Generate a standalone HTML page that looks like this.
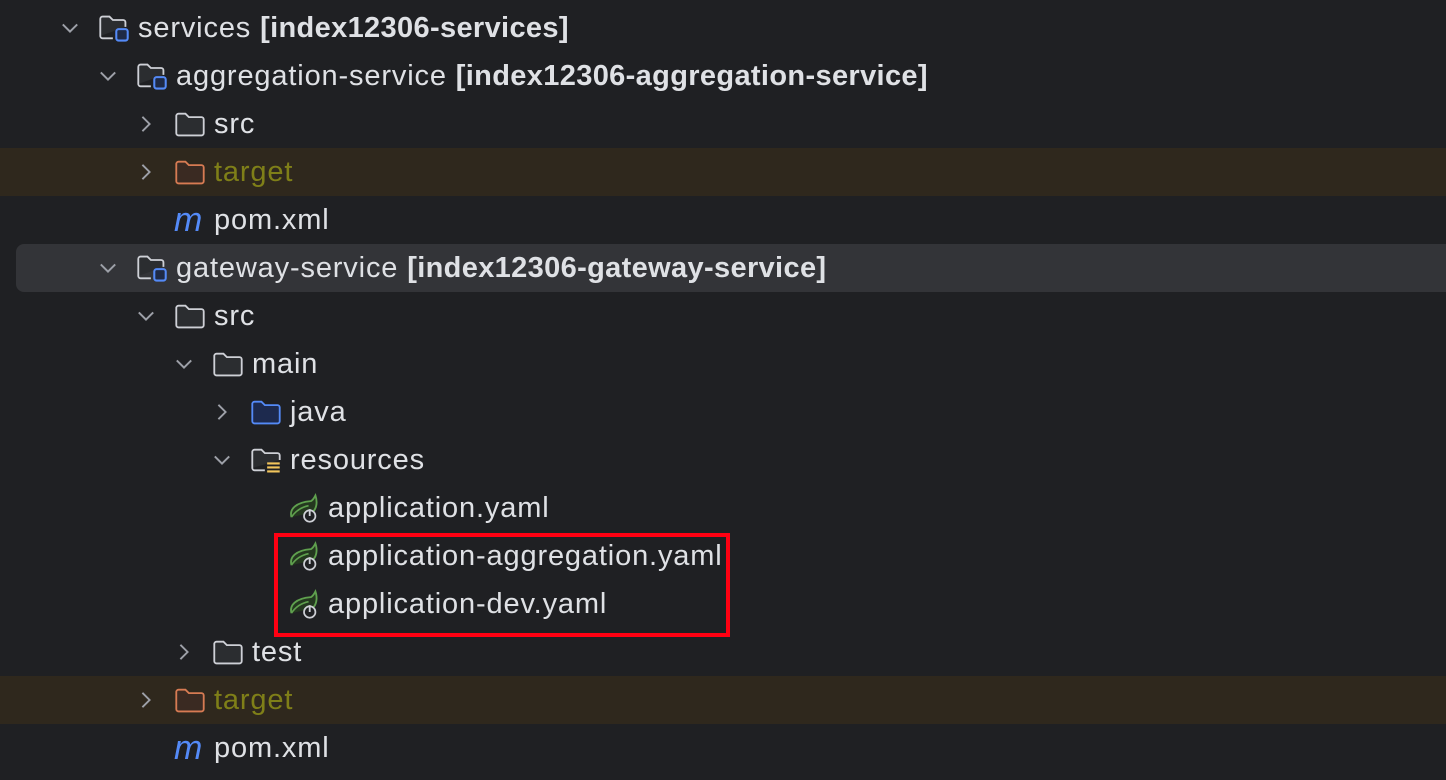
<!DOCTYPE html>
<html><head><meta charset="utf-8"><style>
html,body{margin:0;padding:0;width:1446px;height:780px;overflow:hidden;background:#1f2023;font-family:"Liberation Sans",sans-serif;}
.row{position:absolute;left:0;width:1446px;height:48px;}
.t{position:absolute;top:8px;font-size:29px;letter-spacing:0.85px;color:#dfe1e5;white-space:nowrap;line-height:32px;}
.t b{font-weight:bold;letter-spacing:0.35px;}
.ch{position:absolute;top:12px;width:24px;height:24px;}
.ic{position:absolute;top:8px;width:32px;height:32px;}
.m{position:absolute;top:5px;font-family:"Liberation Sans",sans-serif;font-style:italic;font-size:34px;color:#548af7;}
</style></head><body>
<div style="position:absolute;left:0;top:148px;width:1446px;height:48px;background:#2f281d"></div>
<div style="position:absolute;left:0;top:676px;width:1446px;height:48px;background:#2f281d"></div>
<div style="position:absolute;left:16px;top:244px;width:1440px;height:48px;background:#333438;border-radius:8px"></div>

<svg width="0" height="0" style="position:absolute">
<defs>
<symbol id="down" viewBox="0 0 20 20"><path d="M4 7l6 6 6-6" fill="none" stroke="#9da0a8" stroke-width="1.6"/></symbol>
<symbol id="right" viewBox="0 0 20 20"><path d="M7 4l6 6-6 6" fill="none" stroke="#9da0a8" stroke-width="1.6"/></symbol>
<symbol id="mod" viewBox="0 0 28 28"><path d="M2 21V6a2 2 0 0 1 2-2h6l3 3h9a2 2 0 0 1 2 2v4" fill="#2b2d30" stroke="#ced0d6" stroke-width="1.6"/><path d="M2 21a2 2 0 0 0 2 2h9" fill="none" stroke="#ced0d6" stroke-width="1.6"/><rect x="16" y="15" width="10" height="10" rx="2" fill="#1f2a45" stroke="#548af7" stroke-width="1.8"/></symbol>
<symbol id="fold" viewBox="0 0 28 28"><path d="M2 22V7a2 2 0 0 1 2-2h6l3 3h11a2 2 0 0 1 2 2v12a2 2 0 0 1-2 2H4a2 2 0 0 1-2-2z" fill="#2b2d30" stroke="#ced0d6" stroke-width="1.6"/></symbol>
<symbol id="tfold" viewBox="0 0 28 28"><path d="M2 22V7a2 2 0 0 1 2-2h6l3 3h11a2 2 0 0 1 2 2v12a2 2 0 0 1-2 2H4a2 2 0 0 1-2-2z" fill="#3a2a22" stroke="#d77b53" stroke-width="1.6"/></symbol>
<symbol id="jfold" viewBox="0 0 28 28"><path d="M2 22V7a2 2 0 0 1 2-2h6l3 3h11a2 2 0 0 1 2 2v12a2 2 0 0 1-2 2H4a2 2 0 0 1-2-2z" fill="#1d2a4e" stroke="#548af7" stroke-width="1.6"/></symbol>
<symbol id="rfold" viewBox="0 0 28 28"><path d="M2 21V7a2 2 0 0 1 2-2h6l3 3h11a2 2 0 0 1 2 2v4" fill="#2b2d30" stroke="#ced0d6" stroke-width="1.6"/><path d="M2 21a2 2 0 0 0 2 2h9" fill="none" stroke="#ced0d6" stroke-width="1.6"/><path d="M15 17h11M15 20.5h11M15 24h11" stroke="#f2c55c" stroke-width="1.8"/></symbol>
<symbol id="spring" viewBox="0 0 28 28"><path d="M3 22C1 15 7 9 20 8c2-1 3-3 4-5 2 6 1 12-3 15" fill="#24371f" stroke="#5fa04e" stroke-width="1.6"/><path d="M3 22c4-6 10-9 15-10" fill="none" stroke="#5fa04e" stroke-width="1.4"/><circle cx="19" cy="21" r="5" fill="#1f2023" stroke="#ced0d6" stroke-width="1.5"/><path d="M19 15v6" stroke="#ced0d6" stroke-width="1.6"/></symbol>
</defs></svg>

<div class="row" style="top:4px"><svg class="ch" style="left:58px" viewBox="0 0 20 20"><use href="#down" width="20" height="20"/></svg><svg class="ic" style="left:98px" viewBox="0 0 28 28"><use href="#mod" width="28" height="28"/></svg><div class="t" style="left:138px">services <b>[index12306-services]</b></div></div>
<div class="row" style="top:52px"><svg class="ch" style="left:96px" viewBox="0 0 20 20"><use href="#down" width="20" height="20"/></svg><svg class="ic" style="left:136px" viewBox="0 0 28 28"><use href="#mod" width="28" height="28"/></svg><div class="t" style="left:176px">aggregation-service <b>[index12306-aggregation-service]</b></div></div>
<div class="row" style="top:100px"><svg class="ch" style="left:134px" viewBox="0 0 20 20"><use href="#right" width="20" height="20"/></svg><svg class="ic" style="left:174px" viewBox="0 0 28 28"><use href="#fold" width="28" height="28"/></svg><div class="t" style="left:214px">src</div></div>
<div class="row" style="top:148px"><svg class="ch" style="left:134px" viewBox="0 0 20 20"><use href="#right" width="20" height="20"/></svg><svg class="ic" style="left:174px" viewBox="0 0 28 28"><use href="#tfold" width="28" height="28"/></svg><div class="t" style="left:214px;color:#7f7f18">target</div></div>
<div class="row" style="top:196px"><div class="m" style="left:174px">m</div><div class="t" style="left:214px">pom.xml</div></div>
<div class="row" style="top:244px"><svg class="ch" style="left:96px" viewBox="0 0 20 20"><use href="#down" width="20" height="20"/></svg><svg class="ic" style="left:136px" viewBox="0 0 28 28"><use href="#mod" width="28" height="28"/></svg><div class="t" style="left:176px">gateway-service <b>[index12306-gateway-service]</b></div></div>
<div class="row" style="top:292px"><svg class="ch" style="left:134px" viewBox="0 0 20 20"><use href="#down" width="20" height="20"/></svg><svg class="ic" style="left:174px" viewBox="0 0 28 28"><use href="#fold" width="28" height="28"/></svg><div class="t" style="left:214px">src</div></div>
<div class="row" style="top:340px"><svg class="ch" style="left:172px" viewBox="0 0 20 20"><use href="#down" width="20" height="20"/></svg><svg class="ic" style="left:212px" viewBox="0 0 28 28"><use href="#fold" width="28" height="28"/></svg><div class="t" style="left:252px">main</div></div>
<div class="row" style="top:388px"><svg class="ch" style="left:210px" viewBox="0 0 20 20"><use href="#right" width="20" height="20"/></svg><svg class="ic" style="left:250px" viewBox="0 0 28 28"><use href="#jfold" width="28" height="28"/></svg><div class="t" style="left:290px">java</div></div>
<div class="row" style="top:436px"><svg class="ch" style="left:210px" viewBox="0 0 20 20"><use href="#down" width="20" height="20"/></svg><svg class="ic" style="left:250px" viewBox="0 0 28 28"><use href="#rfold" width="28" height="28"/></svg><div class="t" style="left:290px">resources</div></div>
<div class="row" style="top:484px"><svg class="ic" style="left:288px" viewBox="0 0 28 28"><use href="#spring" width="28" height="28"/></svg><div class="t" style="left:328px">application.yaml</div></div>
<div class="row" style="top:532px"><svg class="ic" style="left:288px" viewBox="0 0 28 28"><use href="#spring" width="28" height="28"/></svg><div class="t" style="left:328px">application-aggregation.yaml</div></div>
<div class="row" style="top:580px"><svg class="ic" style="left:288px" viewBox="0 0 28 28"><use href="#spring" width="28" height="28"/></svg><div class="t" style="left:328px">application-dev.yaml</div></div>
<div class="row" style="top:628px"><svg class="ch" style="left:172px" viewBox="0 0 20 20"><use href="#right" width="20" height="20"/></svg><svg class="ic" style="left:212px" viewBox="0 0 28 28"><use href="#fold" width="28" height="28"/></svg><div class="t" style="left:252px">test</div></div>
<div class="row" style="top:676px"><svg class="ch" style="left:134px" viewBox="0 0 20 20"><use href="#right" width="20" height="20"/></svg><svg class="ic" style="left:174px" viewBox="0 0 28 28"><use href="#tfold" width="28" height="28"/></svg><div class="t" style="left:214px;color:#7f7f18">target</div></div>
<div class="row" style="top:724px"><div class="m" style="left:174px">m</div><div class="t" style="left:214px">pom.xml</div></div>

<div style="position:absolute;left:274px;top:533px;width:448px;height:96px;border:4px solid #ff0012"></div>
</body></html>
